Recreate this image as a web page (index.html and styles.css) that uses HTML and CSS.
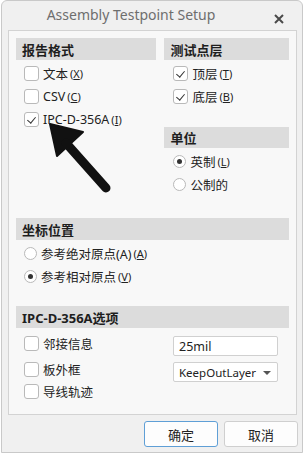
FILE: index.html
```html
<!DOCTYPE html>
<html>
<head>
    <title>Assembly Testpoint Setup</title>
    <link rel="stylesheet" href="styles.css">
</head>
<body>
    <div class="window">
        <div class="titlebar">
            <span class="title">Assembly Testpoint Setup</span>
            <span class="close">
                <svg width="10" height="10" viewBox="0 0 10 10"><path d="M1 1L9 9M9 1L1 9" stroke="#4a4a4a" stroke-width="2"/></svg>
            </span>
        </div>

        <div class="panel">
            <div class="toprow">
                <div class="col left">
                    <div class="header">报告格式</div>
                    <div class="items">
                        <label class="row"><span class="box"></span>文本 <span class="key">(<u>X</u>)</span></label>
                        <label class="row"><span class="box"></span>CSV <span class="key">(<u>C</u>)</span></label>
                        <label class="row"><span class="box checked"></span>IPC-D-356A <span class="key">(<u>I</u>)</span></label>
                    </div>
                </div>
                <div class="col right">
                    <div class="header">测试点层</div>
                    <div class="items">
                        <label class="row"><span class="box checked"></span>顶层 <span class="key">(<u>T</u>)</span></label>
                        <label class="row"><span class="box checked"></span>底层 <span class="key">(<u>B</u>)</span></label>
                    </div>
                    <div class="header unit">单位</div>
                    <div class="items">
                        <label class="row"><span class="radio on"></span>英制 <span class="key">(<u>L</u>)</span></label>
                        <label class="row"><span class="radio"></span>公制的</label>
                    </div>
                </div>
            </div>

            <div class="header wide">坐标位置</div>
            <div class="items">
                <label class="row"><span class="radio"></span>参考绝对原点(A) <span class="key">(<u>A</u>)</span></label>
                <label class="row"><span class="radio on"></span>参考相对原点 <span class="key">(<u>V</u>)</span></label>
            </div>

            <div class="header wide ipc">IPC-D-356A选项</div>
            <div class="options">
                <label class="opt"><span class="box"></span>邻接信息</label>
                <div class="field">25mil</div>
                <label class="opt"><span class="box"></span>板外框</label>
                <div class="field select">KeepOutLayer<span class="caret"></span></div>
                <label class="opt"><span class="box"></span>导线轨迹</label>
                <div></div>
            </div>
        </div>

        <div class="footer">
            <button class="btn default">确定</button>
            <button class="btn">取消</button>
        </div>
    </div>

    <svg class="pointer" width="308" height="456" viewBox="0 0 308 456">
        <path d="M50 124L57 156L83 132Z" fill="#111" stroke="#111" stroke-width="2" stroke-linejoin="round"/>
        <path d="M66 143L106 188" stroke="#111" stroke-width="9" stroke-linecap="round"/>
    </svg>
</body>
</html>
```

FILE: styles.css
```css
body {
    margin: 0;
    background: #ffffff;
    font-family: "Noto Sans", "Noto Sans CJK SC", sans-serif;
    color: #222;
}
.window {
    margin-left: 1px;
    width: 302px;
    height: 453px;
    box-sizing: border-box;
    border: 1px solid #c9c9c9;
    border-radius: 6px 6px 0 0;
    background: #f0f0f0;
    display: flex;
    flex-direction: column;
}
.titlebar {
    height: 29px;
    display: flex;
    align-items: center;
    padding-right: 42px;
    position: relative;
}
.title {
    flex: 1;
    text-align: center;
    font-size: 14px;
    color: #6e6e6e;
    padding-bottom: 2px;
}
.close {
    position: absolute;
    right: 18px;
    top: 6px;
}
.panel {
    margin: 0 5px 0 6px;
    border: 1px solid #d3d3d3;
    background: #f8f8f8;
    padding: 7px 7px 8px 7px;
}
.toprow {
    display: flex;
    gap: 8px;
}
.col.left { width: 141px; }
.col.right { width: 125px; }
.header {
    height: 22px;
    background: #dcdcdc;
    font-size: 13px;
    font-weight: bold;
    display: flex;
    align-items: center;
    padding-left: 6px;
    color: #1e1e1e;
}
.header.unit { margin-top: 19px; height: 21px; }
.header.wide { margin-top: 22px; }
.header.ipc { margin-top: 18px; }
.items {
    padding: 2px 0 0 8px;
}
.right .items { padding-left: 9px; }
.row {
    height: 23px;
    display: flex;
    align-items: center;
    font-size: 12.5px;
    white-space: nowrap;
}
.key {
    font-size: 11px;
    margin-left: 2px;
}
.box {
    width: 15px;
    height: 15px;
    box-sizing: border-box;
    border: 1px solid #b9b9b9;
    border-radius: 3px;
    background: #fff;
    margin-right: 4px;
    position: relative;
    flex: none;
}
.box.checked::after {
    content: "";
    position: absolute;
    left: 4px;
    top: 2px;
    width: 4px;
    height: 7px;
    border-right: 1px solid #333;
    border-bottom: 1px solid #333;
    transform: rotate(40deg);
}
.radio {
    width: 13px;
    height: 13px;
    box-sizing: border-box;
    border: 1px solid #b9b9b9;
    border-radius: 50%;
    background: #fff;
    margin-right: 4px;
    position: relative;
    flex: none;
}
.radio.on::after {
    content: "";
    position: absolute;
    left: 3px;
    top: 3px;
    width: 5px;
    height: 5px;
    border-radius: 50%;
    background: #333;
}
.options {
    display: grid;
    grid-template-columns: 157px 105px;
    grid-template-rows: 26px 22px 22px;
    align-items: start;
    padding-top: 8px;
}
.opt {
    display: flex;
    align-items: center;
    padding-left: 8px;
    font-size: 12.5px;
    height: 15px;
}
.field {
    height: 20px;
    box-sizing: border-box;
    border: 1px solid #d0d0d0;
    border-radius: 2px;
    background: #fff;
    font-size: 12.5px;
    padding-left: 5px;
    display: flex;
    align-items: center;
    position: relative;
}
.field.select {
    font-size: 11.5px;
}
.caret {
    position: absolute;
    right: 6px;
    top: 8px;
    border-left: 4px solid transparent;
    border-right: 4px solid transparent;
    border-top: 4px solid #555;
}
.footer {
    display: flex;
    justify-content: flex-end;
    gap: 6px;
    padding: 6px 4px 0 0;
}
.btn {
    width: 74px;
    height: 26px;
    border: 1px solid #cfcfcf;
    border-radius: 3px;
    background: #fdfdfd;
    font-family: "Noto Sans CJK SC", sans-serif;
    font-size: 13px;
    color: #222;
}
.btn.default {
    border-color: #5f9fd6;
}
.pointer {
    position: absolute;
    left: 0;
    top: 0;
    pointer-events: none;
}
```
